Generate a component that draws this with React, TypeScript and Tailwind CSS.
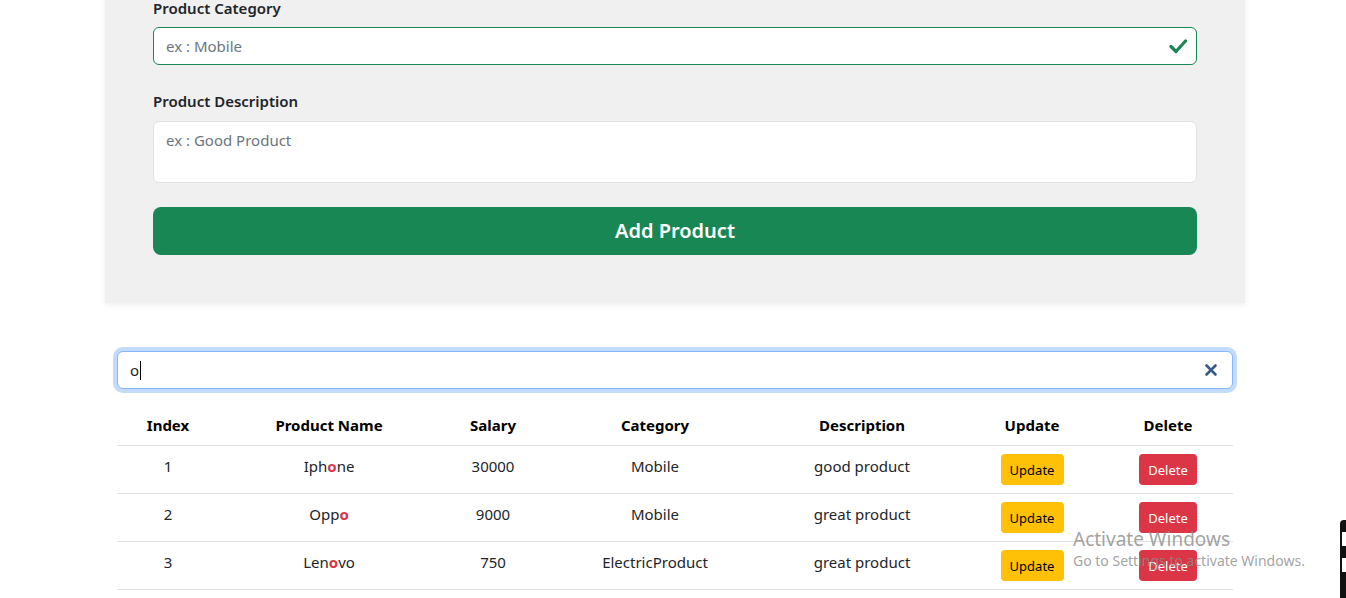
import React from 'react';

const rows = [
	{ id: 1, name: ['Iph', 'o', 'ne'], salary: '30000', category: 'Mobile', desc: 'good product' },
	{ id: 2, name: ['Opp', 'o', ''], salary: '9000', category: 'Mobile', desc: 'great product' },
	{ id: 3, name: ['Len', 'o', 'vo'], salary: '750', category: 'ElectricProduct', desc: 'great product' },
];

function CheckIcon() {
	return (
		<svg width="18" height="16" viewBox="0 0 18 16" className="absolute right-[10px] top-[11px]">
			<path d="M2 8.5 L7 13.5 L16.5 3" fill="none" stroke="#198754" strokeWidth="3.2" strokeLinecap="round" strokeLinejoin="round" />
		</svg>
	);
}

function ClearIcon() {
	return (
		<svg width="12" height="12" viewBox="0 0 12 12" className="absolute right-[16px] top-[13px]">
			<path d="M1.5 1.5 L10.5 10.5 M10.5 1.5 L1.5 10.5" stroke="#3a5a86" strokeWidth="2.6" strokeLinecap="round" />
		</svg>
	);
}

export default function App() {
	return (
		<div className="relative min-h-screen overflow-hidden bg-white font-['Noto_Sans',sans-serif] text-[#212529]">
			<div className="-mt-1 ml-[105px] w-[1140px] bg-[#f0f0f0] px-12 pb-12 shadow-[0_2px_6px_rgba(0,0,0,0.07)]">
				<label className="mb-[7px] block text-[15px] leading-6 font-semibold">Product Category</label>
				<div className="relative">
					<div className="flex h-[38px] items-center rounded-md border border-[#198754] bg-white px-3 text-[15px] text-[#6c757d]">
						ex : Mobile
					</div>
					<CheckIcon />
				</div>
				<label className="mt-6 mb-2 block text-[15px] leading-6 font-semibold">Product Description</label>
				<div className="h-[62px] rounded-md border border-[#dee2e6] bg-white px-3 py-[6px] text-[15px] leading-6 text-[#6c757d]">
					ex : Good Product
				</div>
				<button className="mt-6 flex h-12 w-full items-center justify-center rounded-lg bg-[#198754] text-xl font-semibold text-white">
					Add Product
				</button>
			</div>

			<div className="mt-12 ml-[105px] w-[1140px] px-3">
				<div className="relative mb-4">
					<div className="flex h-[38px] items-center rounded-md border border-[#86b7fe] bg-white px-3 text-[15px] text-[#212529] shadow-[0_0_0_4px_rgba(13,110,253,0.25)]">
						<span>o</span>
						<span className="ml-px h-[19px] w-px bg-black" />
					</div>
					<ClearIcon />
				</div>

				<table className="w-full table-fixed border-collapse text-center text-[15px] leading-6">
					<thead>
						<tr className="border-b border-[#dee2e6] text-black">
							<th className="w-[102px] py-2 font-bold">Index</th>
							<th className="w-[220px] py-2 font-bold">Product Name</th>
							<th className="w-[108px] py-2 font-bold">Salary</th>
							<th className="w-[216px] py-2 font-bold">Category</th>
							<th className="w-[198px] py-2 font-bold">Description</th>
							<th className="w-[142px] py-2 font-bold">Update</th>
							<th className="py-2 font-bold">Delete</th>
						</tr>
					</thead>
					<tbody>
						{rows.map((row) => (
							<tr key={row.id} className="border-b border-[#dee2e6]">
								<td className="py-2 align-top">{row.id}</td>
								<td className="py-2 align-top">
									{row.name[0]}
									<span className="font-bold text-[#dc3545]">{row.name[1]}</span>
									{row.name[2]}
								</td>
								<td className="py-2 align-top">{row.salary}</td>
								<td className="py-2 align-top">{row.category}</td>
								<td className="py-2 align-top">{row.desc}</td>
								<td className="py-2 align-top">
									<button className="h-[31px] w-[63px] rounded bg-[#ffc107] text-[13px] text-black">Update</button>
								</td>
								<td className="py-2 align-top">
									<button className="h-[31px] w-[58px] rounded bg-[#dc3545] text-[13px] text-white">Delete</button>
								</td>
							</tr>
						))}
					</tbody>
				</table>
			</div>

			<div className="pointer-events-none absolute top-[527px] left-[1073px] text-[#8a8a8a]/80">
				<div className="text-[19px] leading-6">Activate Windows</div>
				<div className="text-[14px] leading-5">Go to Settings to activate Windows.</div>
			</div>

			<div className="absolute top-[520px] left-[1340px] flex h-[78px] w-[6px] flex-col gap-[12px] rounded-tl bg-[#111] pt-[12px]">
				<div className="h-[14px] w-[4px] self-end bg-white" />
				<div className="h-[14px] w-[4px] self-end bg-white" />
			</div>
		</div>
	);
}
